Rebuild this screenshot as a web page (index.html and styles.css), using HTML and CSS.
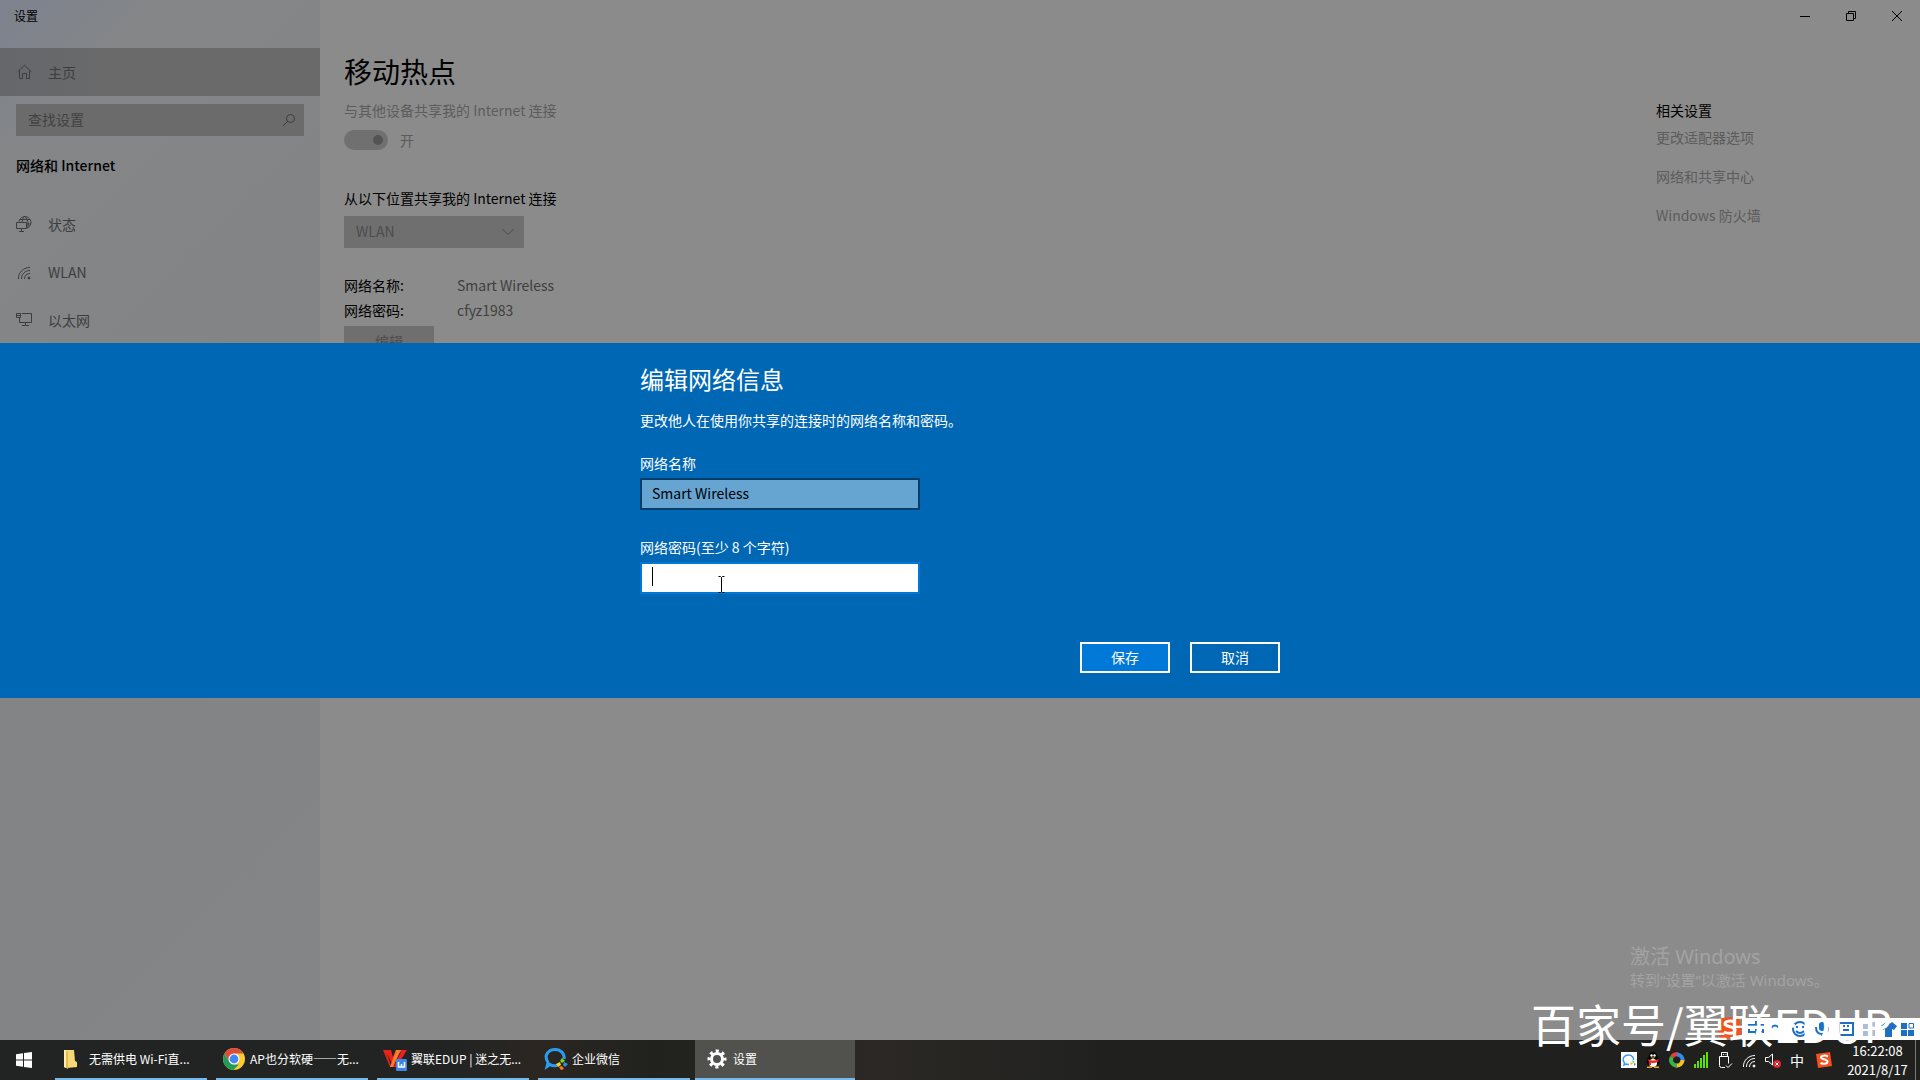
FILE: index.html
```html
<!DOCTYPE html>
<html lang="zh-CN">
<head>
<meta charset="utf-8">
<title>设置</title>
<link rel="stylesheet" href="styles.css">
</head>
<body>
<div class="desktop">
  <div class="window">
    <aside class="sidebar">
      <div class="window-title">设置</div>
      <a class="home" href="#">
        <svg class="icon" viewBox="0 0 16 16"><path d="M1.500 8 8.500 1.200 15.500 8M3.500 6.500V14.500h3V9.500h4V14.500h3V6.500"/></svg>
        主页
      </a>
      <form class="search">
        <input type="text" placeholder="查找设置" aria-label="查找设置">
        <svg class="search-icon" viewBox="0 0 14 14"><circle cx="8.500" cy="5.500" r="4"/><path d="M5.500 8.500 1 13"/></svg>
      </form>
      <h2 class="section">网络和 Internet</h2>
      <nav class="nav">
        <a href="#"><svg class="icon" viewBox="0 0 16 16"><path d="M3 5.500A6 6 0 1 1 11.500 12M6 6Q6 2.500 8.500.5M9 .5q4.500 5 2.500 11.500M4 3.500h10M11 8h4M.5 6.500h10v6H.5zM5.500 12.500v3M3 15.500h5"/></svg>状态</a>
        <a href="#"><svg class="icon" viewBox="0 0 16 16"><path d="M2.500 15C2 9 7 3.500 14 3.500M5.500 15c0-5 3.500-8.500 8.500-8.500M8.500 15c0-3 2-5.500 5.500-5.500"/><circle class="dot" cx="13" cy="14" r="1"/></svg>WLAN</a>
        <a href="#"><svg class="icon" viewBox="0 0 16 16"><path d="M5.500 1.500h10v9H3.500v-5M.5 1.500h4v4h-4zM.5 3.500h4M9.500 10.500v3M6 13.500h7"/></svg>以太网</a>
      </nav>
    </aside>
    <div class="content">
      <div class="window-controls">
        <button type="button" aria-label="最小化"><svg viewBox="0 0 10 10"><path d="M0 5.500h10"/></svg></button>
        <button type="button" aria-label="还原"><svg viewBox="0 0 10 10"><path d="M.5 2.500h7v7h-7zM2.500 2.500v-2h7v7h-2"/></svg></button>
        <button type="button" aria-label="关闭"><svg viewBox="0 0 10 10"><path d="m0 0 10 10M10 0 0 10"/></svg></button>
      </div>
      <div class="columns">
        <main class="page">
          <h1>移动热点</h1>
          <p class="muted">与其他设备共享我的 Internet 连接</p>
          <label class="toggle"><input type="checkbox" checked disabled>开</label>
          <label class="share-label" for="share">从以下位置共享我的 Internet 连接</label>
          <div class="select">
            <select id="share" disabled><option>WLAN</option></select>
            <svg viewBox="0 0 12 8"><path d="m.5 1 5.500 5.500L11.500 1"/></svg>
          </div>
          <dl class="details">
            <dt>网络名称:</dt><dd>Smart Wireless</dd>
            <dt>网络密码:</dt><dd>cfyz1983</dd>
          </dl>
          <button class="edit" type="button" disabled>编辑</button>
        </main>
        <aside class="related">
          <h2>相关设置</h2>
          <a href="#">更改适配器选项</a>
          <a href="#">网络和共享中心</a>
          <a href="#">Windows 防火墙</a>
        </aside>
      </div>
    </div>
  </div>

  <div class="activate">
    <p class="activate-title">激活 Windows</p>
    <p>转到“设置”以激活 Windows。</p>
  </div>

  <section class="dialog" role="dialog" aria-labelledby="dialog-title">
    <form class="dialog-body">
      <h2 id="dialog-title">编辑网络信息</h2>
      <p>更改他人在使用你共享的连接时的网络名称和密码。</p>
      <label for="ssid">网络名称</label>
      <input id="ssid" type="text" value="Smart Wireless">
      <label for="key">网络密码(至少 8 个字符)</label>
      <div class="key-field">
        <input id="key" class="focused" type="text">
        <span class="caret"></span>
        <svg class="pointer" viewBox="0 0 8 18"><path d="M.5.5h2l1 1 1-1h2M3.500 1.500v14M.5 16.500h2l1-1 1 1h2"/></svg>
      </div>
      <div class="actions">
        <button class="primary" type="button">保存</button>
        <button type="button">取消</button>
      </div>
    </form>
  </section>

  <div class="ime">
    <svg class="ime-logo" viewBox="0 0 26 24"><path fill="#f4511e" d="M1 3 23 0l3 20-22 4z"/><path fill="none" stroke="#fff" stroke-width="3" d="M19 6c-4-2-10-1-10 2s10 2 10 6-7 4-11 2"/></svg>
    <svg class="ime-tools" viewBox="0 0 176 22">
      <g fill="none" stroke="#1d6fc4" stroke-width="2"><path d="M6 7h14v7H6zM13 3v15M28 10q4-5 8 0"/><circle cx="57" cy="11" r="7"/><path d="M53 13q4 4 8 0M54 8v2M60 8v2M73 9q0 7 6 7t6-7M79 16v3M96 5h14v12H96zM100 8h2m2 0h2m-6 4h6"/></g>
      <rect fill="#1d6fc4" x="76" y="4" width="6" height="9" rx="3"/>
      <path fill="#a9bdd8" d="M120 6h5v5h-5zM127 4h5v14h-12v-5h7z"/>
      <path fill="#1d6fc4" d="m138 8 5-4q3 3 6 0l5 4-3 4-2-1v8h-7v-8l-2 1zM158 5h6v6h-6zM158 12h6v6h-6zM165 12h6v6h-6z"/>
      <path fill="none" stroke="#1d6fc4" stroke-width="1" d="M166 5.500h4.500v4.500H166z"/>
    </svg>
  </div>
  <div class="watermark">百家号/翼联EDUP</div>

  <footer class="taskbar">
    <button class="start" type="button" aria-label="开始"><svg viewBox="0 0 16 16"><path d="M0 2.200 7 1.300V7.500H0zM8 1.100 16 0v7.500H8zM0 8.500h7v6.200l-7-1zM8 8.500h8V16l-8-1.100z"/></svg></button>
    <div class="tasks">
      <button type="button"><svg viewBox="0 0 24 24"><path fill="#f8d775" d="M3 3h10l1 11 2 1v5L6 21l-3-1z"/><path fill="#fff0b4" d="M3 3h2v18l-2-1z"/><path fill="#e8b94c" d="m5 4 2 1v17l-2-1z"/></svg>无需供电 Wi-Fi直...</button>
      <button type="button"><svg viewBox="0 0 24 24"><circle cx="12" cy="12" r="11" fill="#fbc934"/><path fill="#dd4b3e" d="M2.500 6.500A11 11 0 0 1 21.500 6.500H12L7.200 14.700z"/><path fill="#1f9d58" d="M2.500 6.500 7.200 14.700 12 17.500h4.800L11.500 23A11 11 0 0 1 2.500 6.500z"/><circle cx="12" cy="12" r="5.500" fill="#fff"/><circle cx="12" cy="12" r="4.400" fill="#4285f4"/></svg>AP也分软硬——无...</button>
      <button type="button"><svg viewBox="0 0 24 24"><path fill="#e8231c" d="M0 3h8l2 7 3-7h11L16 16l-3 4H7z"/><path fill="#26221f" d="m4 6 5 11 5-11 4-1-7 14H8z"/><path fill="#ff7a2e" d="M13 3h5L10 20H7z"/><rect x="13" y="12" width="11" height="12" rx="1" fill="#3e85ea"/><path fill="none" stroke="#fff" stroke-width="1.500" d="M15.500 15v5h6v-5M18.500 17v3"/></svg>翼联EDUP | 迷之无...</button>
      <button type="button"><svg viewBox="0 0 24 24"><path fill="none" stroke="#2a9df0" stroke-width="3" d="M13 18.500q-4 1-7-1l-3 2 1-4C-1 8 5 2.500 11 2.500S21 7 20 12"/><path fill="#7ed321" d="m18 11 3 3-3 2-2-2z"/><path fill="#2d8cf0" d="m20 15 4 2-3 3-2-2z"/><path fill="#ff7a1a" d="m18 19 2 3-3 1-2-3z"/><path fill="#ffd12a" d="m12 17 4-2 1 3-3 2z"/></svg>企业微信</button>
      <button class="active" type="button"><svg viewBox="0 0 24 24"><circle cx="12" cy="12" r="5.500" fill="none" stroke="#fff" stroke-width="3"/><circle cx="12" cy="12" r="8" fill="none" stroke="#fff" stroke-width="3" stroke-dasharray="3.142 3.142" stroke-dashoffset="1.571"/></svg>设置</button>
    </div>
    <div class="tray">
      <svg viewBox="0 0 16 16"><path fill="#fff" d="M0 0h16v16H0z"/><path fill="none" stroke="#3c9cf0" stroke-width="1.500" d="M8 12.500q-2 0-3-.5l-2 1 .5-2C0 6 4 3 7.500 3S13 6 12.500 8"/><path fill="#fbc02d" d="m9 11 2-1 1 2-2 1z"/><path fill="#7cc84a" d="m11 8 3 2-2 1z"/><path fill="#3c8cf0" d="m13 11 2 1-2 2z"/></svg>
      <svg viewBox="0 0 16 16"><ellipse cx="8" cy="9" rx="6.500" ry="6" fill="#050505"/><ellipse cx="8" cy="4.500" rx="4.200" ry="4.500" fill="#050505"/><ellipse cx="8" cy="11" rx="4" ry="4" fill="#fff"/><path fill="#e22" d="M2.500 7q5.500 3 11 0v2.500Q8 12 6 10.500V13H4v-3z"/><circle cx="6.500" cy="3.500" r="1.200" fill="#fff"/><circle cx="9.500" cy="3.500" r="1.200" fill="#fff"/><path fill="#f7a81b" d="M5.500 5.500h5L8 7zM2 14.500h5V16H2zM9 14.500h5V16H9z"/></svg>
      <svg viewBox="0 0 16 16"><g fill="none" stroke-width="4"><path stroke="#ea3f35" d="M3 5a5.500 5.500 0 0 1 6-2.500"/><path stroke="#2d8cf0" d="M8 2.500A5.500 5.500 0 0 1 13.500 9"/><path stroke="#f9bd22" d="M13.500 8A5.500 5.500 0 0 1 7 13.500"/><path stroke="#37b34a" d="M8 13.500A5.500 5.500 0 0 1 3 5"/></g></svg>
      <svg viewBox="0 0 16 16"><path fill="#5ee100" d="M1 12h2v4H1zM4 9h2v7H4zM7 6h2v10H7zM10 3h2v13h-2zM13 0h2v16h-2z"/></svg>
      <svg class="line" viewBox="0 0 16 16"><path d="M4.500 4V.5h6V4M6 2.500h1M8.500 2.500h1M2.500 4.500h9v7M2.500 4.500v9q0 2 2 2H8M9 13.500l2 2 4-4"/></svg>
      <svg class="line" viewBox="0 0 16 16"><path d="M2.500 15C2 9 7 3.500 14 3.500M5.500 15c0-5 3.500-8.500 8.500-8.500M8.500 15c0-3 2-5.500 5.500-5.500"/><circle cx="13" cy="14" r="1" fill="#fff"/></svg>
      <svg class="line" viewBox="0 0 16 16"><path d="M.5 5.500h3L7.500 2v11l-4-3.500h-3z"/><circle cx="12" cy="12" r="4" fill="#d9232e" stroke="none"/><path d="m10.500 10.500 3 3M13.500 10.500l-3 3"/></svg>
      <span class="ime-mode">中</span>
      <svg class="sogou" viewBox="0 0 16 16"><path fill="#f4511e" d="m0 2 14-2 2 14-14 2z"/><path fill="none" stroke="#fff" stroke-width="2" d="M12 4.500C9 3 5 3.500 5 5.500s6.500 1.500 6.500 4-4 3-7 1.500"/></svg>
      <time class="clock"><span>16:22:08</span><span>2021/8/17</span></time>
    </div>
  </footer>
</div>
</body>
</html>
```
FILE: styles.css
```css
* { box-sizing: border-box; }

body {
  margin: 0;
  background: #8b8b8b;
  color: #000;
  font: 14px/20px "Noto Sans CJK SC", sans-serif;
}

h1, h2, p, dl, dd { margin: 0; font-weight: 400; }
a { color: inherit; text-decoration: none; }
button, input, select { font: inherit; color: inherit; border: 0; border-radius: 0; margin: 0; }
svg { display: block; flex: none; }

.desktop {
  position: relative;
  display: flex;
  flex-direction: column;
  min-height: 100vh;
}

.window { display: flex; flex: 1; }

/* Sidebar */
.sidebar {
  width: 320px;
  background: linear-gradient(135deg, #7d828f 0, #848688 110px, #828485 420px, #838587 100%);
}
.window-title { height: 48px; padding: 6px 14px; font-size: 12px; }
.home, .nav a {
  display: flex;
  align-items: center;
  gap: 16px;
  height: 48px;
  padding: 0 16px;
  color: #3d3d3d;
}
.nav a { padding-bottom: 2px; }
.home { background: linear-gradient(90deg, #65676b, #6a6a6a 120px); }
.icon { width: 16px; height: 16px; fill: none; stroke: currentColor; }
.dot { fill: currentColor; }
.search { display: flex; align-items: center; margin: 8px 16px 0; padding-right: 8px; background: #6a6b6a; color: #3d3d3d; }
.search input { flex: 1; min-width: 0; height: 32px; padding: 0 12px 3px; background: none; }
.search input::placeholder { color: #424242; opacity: 1; }
.search-icon { width: 14px; height: 14px; fill: none; stroke: currentColor; }
.section { margin: 19px 16px 0; font-size: 14px; font-weight: 500; }
.nav { margin-top: 26px; }

/* Settings page */
.content { flex: 1; }
.window-controls { display: flex; justify-content: flex-end; height: 32px; }
.window-controls button { display: grid; place-items: center; width: 46px; background: none; }
.window-controls svg { width: 10px; height: 10px; fill: none; stroke: #000; }
.columns { display: flex; justify-content: space-between; padding: 19px 24px 0; }
.page h1 { font-size: 28px; line-height: 40px; }
.muted { margin-top: 9px; color: #5c5c5c; }
.toggle { display: flex; align-items: center; gap: 12px; margin-top: 10px; color: #5c5c5c; }
.toggle input {
  appearance: none;
  display: flex;
  align-items: center;
  justify-content: flex-end;
  width: 44px;
  height: 20px;
  padding-right: 5px;
  border-radius: 10px;
  background: #707070;
}
.toggle input::before { content: ""; width: 10px; height: 10px; border-radius: 5px; background: #545454; }
.share-label { display: block; margin-top: 38px; }
.select { position: relative; width: 180px; margin-top: 8px; color: #4c4c4c; }
.select select { appearance: none; display: block; width: 100%; height: 32px; padding: 0 12px 2px; background: #6f6f6f; opacity: 1; }
.select svg { position: absolute; right: 10px; top: 12px; width: 12px; height: 8px; fill: none; stroke: currentColor; }
.details { display: grid; grid-template-columns: 113px auto; row-gap: 5px; margin-top: 27px; }
.details dd { color: #3f3f3f; }
.edit { width: 90px; height: 32px; margin-top: 6px; padding: 0 0 2px; background: #6f6f6f; color: #4c4c4c; }
.related { display: flex; flex-direction: column; width: 240px; padding-top: 49px; }
.related h2 { font-size: 14px; margin-bottom: 7px; }
.related a { margin-bottom: 19px; color: #5c5c5c; }

/* Edit dialog, over the page */
.dialog { position: absolute; top: 343px; left: 0; right: 0; background: #0067b4; color: #fff; }
.dialog-body { display: flex; flex-direction: column; width: 640px; margin: 0 auto; padding: 18px 0 25px; }
.dialog h2 { font-size: 24px; line-height: 36px; }
.dialog p { margin: 13px 0 23px; }
.dialog label { margin-bottom: 5px; }
.dialog input { width: 280px; height: 32px; padding: 0 10px 2px; border: 2px solid #003e6c; background: #66a4d2; color: #000; }
.dialog label + input { margin-bottom: 27px; }
.key-field { position: relative; }
.dialog .focused { display: block; border-color: #0078d7; background: #fff; }
.caret { position: absolute; left: 12px; top: 5px; width: 1px; height: 19px; background: #000; }
.pointer { position: absolute; left: 78px; top: 14px; width: 8px; height: 18px; fill: none; stroke: #000; }
.actions { display: flex; justify-content: flex-end; gap: 20px; margin-top: 48px; }
.actions button { width: 90px; height: 31px; padding: 0 0 2px; border: 2px solid #fff; background: none; }
.actions .primary { background: #0078d7; }

/* Overlays near the tray */
.activate { position: absolute; right: 88px; bottom: 90px; width: 202px; color: #a3a3a3; white-space: nowrap; font-family: "Noto Sans", "Noto Sans CJK SC", sans-serif; font-size: 15px; }
.activate-title { font-size: 20px; line-height: 26px; }
.ime { position: absolute; right: 0; bottom: 40px; display: flex; align-items: flex-end; }
.ime-logo { width: 26px; height: 24px; }
.ime-tools { width: 178px; height: 22px; background: #fff; }
.watermark { position: absolute; right: 28px; bottom: 32px; z-index: 1; color: #fff; font-size: 45px; line-height: 48px; white-space: nowrap; }

/* Taskbar */
.taskbar { display: flex; height: 40px; background: linear-gradient(90deg, #222423 0, #222423 24%, #2b2622 28%, #21221e 34%, #2b2825 46%, #20211f 58%, #20211f 100%); color: #fff; }
.taskbar button { background: none; }
.start { display: grid; place-items: center; width: 48px; padding: 0; }
.start svg { width: 16px; height: 16px; fill: #fff; }
.tasks { display: flex; gap: 9px; margin-left: 7px; }
.tasks button { display: flex; align-items: center; gap: 4px; width: 152px; padding: 0 0 0 6px; border-bottom: 2px solid #76b9ed; font-size: 12px; white-space: nowrap; }
.tasks svg { width: 24px; height: 24px; }
.tasks .active { width: 160px; padding-left: 10px; margin-left: -4px; background: #51514e; }
.tray { display: flex; align-items: center; gap: 8px; margin-left: auto; border-right: 1px solid #777; margin-right: 4px; }
.tray svg { width: 16px; height: 16px; }
.tray .line { fill: none; stroke: #fff; }
.ime-mode { width: 16px; text-align: center; }
.tray .sogou { margin-left: 3px; }
.clock { display: flex; flex-direction: column; align-items: center; width: 75px; font-size: 13px; line-height: 19px; }
```
